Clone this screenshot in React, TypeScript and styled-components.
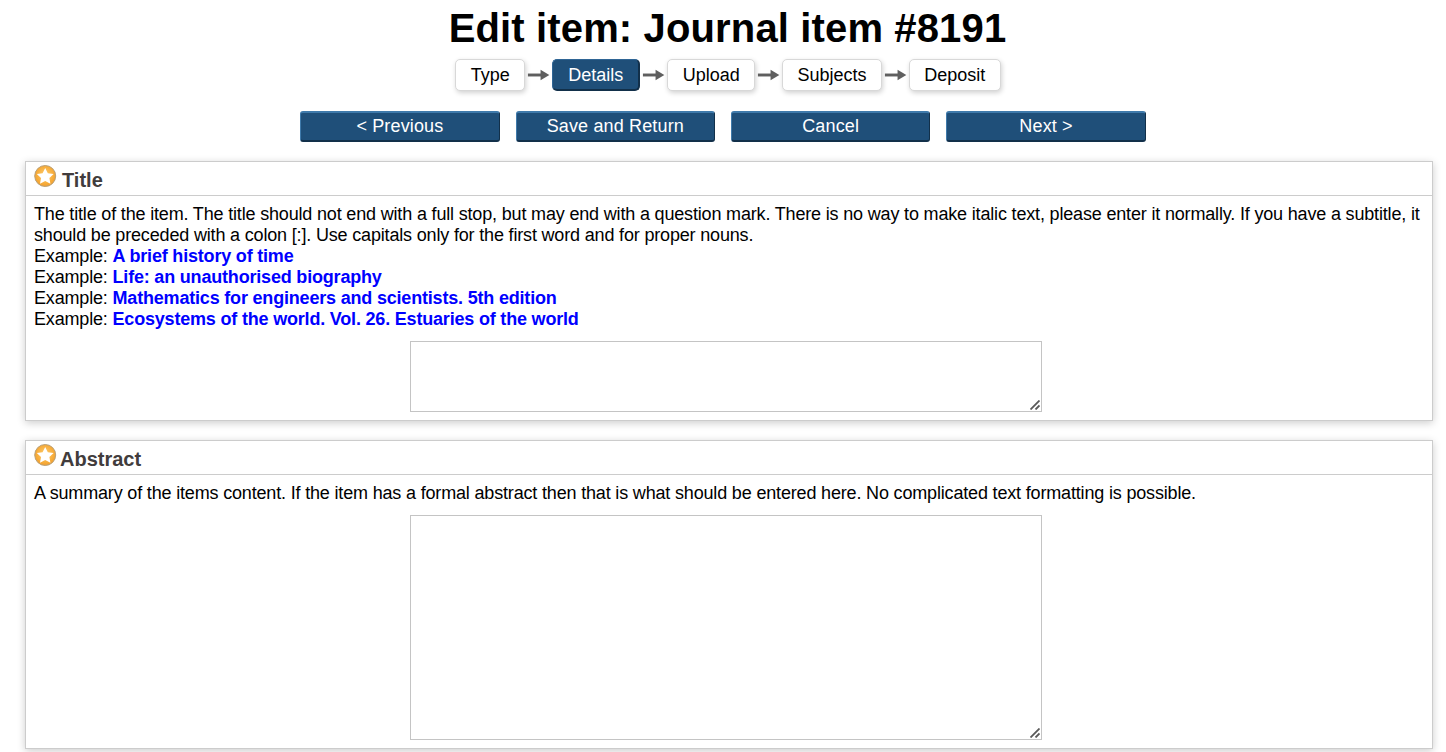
import React from "react";
import styled, { createGlobalStyle } from "styled-components";

const GlobalStyle = createGlobalStyle`
  html, body {
    margin: 0;
    padding: 0;
    background: #fff;
    overflow: hidden;
    font-family: "Liberation Sans", Arial, sans-serif;
    font-size: 18px;
    color: #000;
  }
`;

const Page = styled.div`
  width: 1446px;
  height: 752px;
  overflow: hidden;
  padding: 0 13px 0 25px;
  box-sizing: border-box;
`;

const Heading = styled.h1`
  margin: 0 3px 0 0;
  padding-top: 5px;
  height: 54px;
  box-sizing: border-box;
  font-size: 40px;
  line-height: 46px;
  font-weight: bold;
  text-align: center;
  letter-spacing: 0.14px;
`;

const Flow = styled.div`
  display: flex;
  justify-content: center;
  align-items: center;
  height: 32px;
  margin: 5px 2px 0 0;
`;

const Step = styled.div<{ $active?: boolean }>`
  height: 32px;
  box-sizing: border-box;
  padding: ${(p) => (p.$active ? "1px 15px 0" : "0 14.25px")};
  display: flex;
  align-items: center;
  border-radius: 5px;
  font-size: 18px;
  background: ${(p) => (p.$active ? "#1f4f79" : "#fff")};
  color: ${(p) => (p.$active ? "#fff" : "#000")};
  border: 1px solid ${(p) => (p.$active ? "#2f6595" : "#d8d8d8")};
  border-bottom: ${(p) => (p.$active ? "2px solid #12304a" : "1px solid #d8d8d8")};
  border-right: ${(p) => (p.$active ? "2px solid #12304a" : "1px solid #d8d8d8")};
  box-shadow: ${(p) => (p.$active ? "none" : "1px 2px 5px rgba(0,0,0,0.18)")};
`;

const Arrow = styled.svg`
  width: 27.25px;
  height: 14px;
  display: block;
  flex: none;
`;

const Actions = styled.div`
  display: flex;
  justify-content: center;
  gap: 16px;
  margin: 20px 12px 19px 0;
`;

const ActionButton = styled.button`
  width: 199.4px;
  height: 31px;
  box-sizing: border-box;
  padding: 0;
  font-family: inherit;
  font-size: 18px;
  letter-spacing: 0.15px;
  color: #fff;
  background: #1f4f79;
  border: 1px solid #1f4f79;
  border-top: 2px solid #3f7aab;
  border-left-color: #3f7aab;
  border-bottom: 2px solid #12304a;
  border-right-color: #12304a;
  border-radius: 3px;
`;

const Panel = styled.section<{ $height: number }>`
  height: ${(p) => p.$height}px;
  box-sizing: border-box;
  border: 1px solid #ccc;
  background: #fff;
  box-shadow: 0 2px 8px rgba(0, 0, 0, 0.2);
  margin-bottom: 19px;
`;

const PanelHeader = styled.div`
  height: 34px;
  box-sizing: border-box;
  border-bottom: 1px solid #ccc;
  display: flex;
  align-items: flex-start;
  padding-left: 8px;
`;

const StarIcon = styled.svg`
  width: 23px;
  height: 23px;
  margin-top: 3px;
  display: block;
  flex: none;
`;

const PanelTitle = styled.h2<{ $gap: number }>`
  margin: 6px 0 0 ${(p) => p.$gap}px;
  font-size: 20px;
  line-height: 24px;
  font-weight: bold;
  color: #413c3c;
`;

const PanelBody = styled.div`
  padding: 8px 8px 0;
  line-height: 21px;
  font-size: 18px;
  letter-spacing: -0.17px;
`;

const Sample = styled.b`
  color: #0000ff;
  font-weight: bold;
  letter-spacing: -0.19px;
`;

const FieldRow = styled.div<{ $top: number }>`
  display: flex;
  justify-content: center;
  margin-top: ${(p) => p.$top}px;
`;

const FieldWrap = styled.div`
  position: relative;
  margin-right: 6px;
`;

const Field = styled.textarea<{ $height: number }>`
  display: block;
  width: 632px;
  height: ${(p) => p.$height}px;
  box-sizing: border-box;
  border: 1px solid #c4c4c4;
  border-radius: 0;
  outline: none;
  margin: 0;
  padding: 2px;
  background: #fff;
  resize: none;
`;

const Grip = styled.svg`
  position: absolute;
  right: 2px;
  bottom: 2px;
  width: 10px;
  height: 10px;
  display: block;
  pointer-events: none;
`;

const Star = () => (
  <StarIcon viewBox="0 0 23 23">
    <defs>
      <radialGradient id="starDisc" cx="50%" cy="45%" r="55%">
        <stop offset="0%" stopColor="#fdcf72" />
        <stop offset="80%" stopColor="#f6a936" />
        <stop offset="100%" stopColor="#f09f32" />
      </radialGradient>
    </defs>
    <circle cx="11.2" cy="11" r="10.5" fill="url(#starDisc)" stroke="#b8a078" strokeWidth="1" />
    <path
      d="M11.2 3l2.6 5.3 5.8.8-4.2 4 1 5.7-5.2-2.7-5.2 2.7 1-5.7-4.2-4 5.8-.8z"
      fill="#fff"
    />
  </StarIcon>
);

const FlowArrow = () => (
  <Arrow viewBox="0 0 28 14">
    <path d="M3 7h15" stroke="#5f5f5f" strokeWidth="3" fill="none" />
    <path d="M16 1.5L25 7l-9 5.5z" fill="#5f5f5f" />
  </Arrow>
);

const ResizeGrip = () => (
  <Grip viewBox="0 0 10 10">
    <path d="M0.5 9.5L9.5 0.5M5.5 9.5L9.5 5.5" stroke="#5a5a5a" strokeWidth="1.8" fill="none" />
  </Grip>
);

const steps = ["Type", "Details", "Upload", "Subjects", "Deposit"];
const actions = ["< Previous", "Save and Return", "Cancel", "Next >"];
const samples = [
  "A brief history of time",
  "Life: an unauthorised biography",
  "Mathematics for engineers and scientists. 5th edition",
  "Ecosystems of the world. Vol. 26. Estuaries of the world",
];

export default function App() {
  return (
    <Page>
      <GlobalStyle />
      <Heading>Edit item: Journal item #8191</Heading>
      <Flow>
        {steps.map((step, i) => (
          <React.Fragment key={step}>
            {i > 0 && <FlowArrow />}
            <Step $active={step === "Details"}>{step}</Step>
          </React.Fragment>
        ))}
      </Flow>
      <Actions>
        {actions.map((label) => (
          <ActionButton key={label}>{label}</ActionButton>
        ))}
      </Actions>
      <Panel $height={260}>
        <PanelHeader>
          <Star />
          <PanelTitle $gap={5}>Title</PanelTitle>
        </PanelHeader>
        <PanelBody>
          The title of the item. The title should not end with a full stop, but may end with a
          question mark. There is no way to make italic text, please enter it normally. If you
          have a subtitle, it should be preceded with a colon [:]. Use capitals only for the first
          word and for proper nouns.
          {samples.map((sample) => (
            <div key={sample}>
              Example: <Sample>{sample}</Sample>
            </div>
          ))}
          <FieldRow $top={11}>
            <FieldWrap>
              <Field $height={71} />
              <ResizeGrip />
            </FieldWrap>
          </FieldRow>
        </PanelBody>
      </Panel>
      <Panel $height={309}>
        <PanelHeader>
          <Star />
          <PanelTitle $gap={3}>Abstract</PanelTitle>
        </PanelHeader>
        <PanelBody>
          A summary of the items content. If the item has a formal abstract then that is what
          should be entered here. No complicated text formatting is possible.
          <FieldRow $top={11}>
            <FieldWrap>
              <Field $height={225} />
              <ResizeGrip />
            </FieldWrap>
          </FieldRow>
        </PanelBody>
      </Panel>
    </Page>
  );
}
